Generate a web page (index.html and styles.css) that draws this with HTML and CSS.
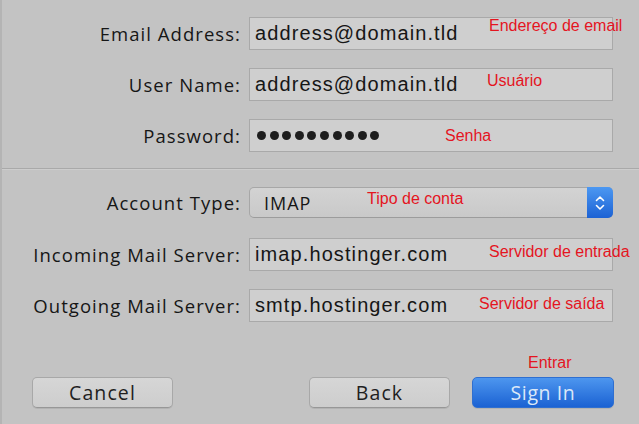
FILE: index.html
```html
<!DOCTYPE html>
<html>
<head>
<meta charset="utf-8">
<link rel="stylesheet" href="styles.css">
</head>
<body>
<div class="window">
  <section class="group group-top">
    <div class="row">
      <label class="label">Email Address:</label>
      <div class="field"><span class="value">address@domain.tld</span><span class="note note-email">Endereço de email</span></div>
    </div>
    <div class="row">
      <label class="label">User Name:</label>
      <div class="field"><span class="value">address@domain.tld</span><span class="note note-user">Usuário</span></div>
    </div>
    <div class="row">
      <label class="label">Password:</label>
      <div class="field"><span class="dots"><i></i><i></i><i></i><i></i><i></i><i></i><i></i><i></i><i></i><i></i></span><span class="note note-pass">Senha</span></div>
    </div>
  </section>
  <div class="separator"></div>
  <section class="group group-bottom">
    <div class="row row-select">
      <label class="label">Account Type:</label>
      <div class="select"><span class="value">IMAP</span><span class="note note-type">Tipo de conta</span>
        <span class="stepper"><svg width="12" height="20" viewBox="0 0 12 20"><path d="M2.5 7.5 L6 4 L9.5 7.5" fill="none" stroke="#fff" stroke-width="1.6" stroke-linecap="round" stroke-linejoin="round"/><path d="M2.5 12.5 L6 16 L9.5 12.5" fill="none" stroke="#fff" stroke-width="1.6" stroke-linecap="round" stroke-linejoin="round"/></svg></span>
      </div>
    </div>
    <div class="row">
      <label class="label">Incoming Mail Server:</label>
      <div class="field"><span class="value">imap.hostinger.com</span><span class="note note-in">Servidor de entrada</span></div>
    </div>
    <div class="row">
      <label class="label">Outgoing Mail Server:</label>
      <div class="field"><span class="value">smtp.hostinger.com</span><span class="note note-out">Servidor de saída</span></div>
    </div>
  </section>
  <div class="buttons">
    <button class="btn btn-cancel">Cancel</button>
    <div class="btn-right">
      <button class="btn btn-back">Back</button>
      <button class="btn btn-primary">Sign In<span class="note note-enter">Entrar</span></button>
    </div>
  </div>
</div>
</body>
</html>
```

FILE: styles.css
```css
html, body {
  margin: 0;
  padding: 0;
  background: #c3c3c3;
}
.window {
  width: 639px;
  height: 424px;
  box-sizing: border-box;
  border-left: 2px solid #b4b4b4;
  background: #c3c3c3;
  font-family: "Liberation Sans", Arial, sans-serif;
  color: #1d1d1d;
  position: relative;
}
.group {
  display: flex;
  flex-direction: column;
}
.group-top {
  padding-top: 17px;
  gap: 18px;
  padding-bottom: 16px;
}
.group-bottom {
  padding-top: 17px;
  gap: 18px;
}
.row {
  display: flex;
  align-items: center;
}
.label {
  width: 247px;
  text-align: right;
  padding-right: 8px;
  box-sizing: border-box;
  font-family: "Open Sans", sans-serif;
  font-size: 18.5px;
  letter-spacing: 1.05px;
  color: #161616;
  flex: none;
}
.field {
  position: relative;
  width: 364px;
  height: 33px;
  box-sizing: border-box;
  background: #cfcfcf;
  border: 1px solid #a9a9a9;
  display: flex;
  align-items: center;
  padding-left: 5px;
}
.value {
  font-size: 20px;
  letter-spacing: 1.1px;
  color: #161616;
}
.dots {
  display: flex;
  gap: 3.6px;
  padding-left: 2px;
}
.dots i {
  display: block;
  width: 9px;
  height: 9px;
  border-radius: 50%;
  background: #1e1e1e;
}
.separator {
  height: 1px;
  background: #a9a9a9;
  border-bottom: 1px solid #cdcdcd;
}
.select {
  position: relative;
  width: 364px;
  height: 31px;
  box-sizing: border-box;
  border-radius: 5px;
  background: linear-gradient(#d3d3d3, #c9c9c9);
  border: 1px solid #a7a7a7;
  border-bottom-color: #9c9c9c;
  display: flex;
  align-items: center;
  padding-left: 14px;
}
.select .value {
  font-family: "Open Sans", sans-serif;
  font-size: 18px;
  letter-spacing: 1px;
}
.stepper {
  position: absolute;
  right: -1px;
  top: -1px;
  bottom: -1px;
  width: 26px;
  border-radius: 0 5px 5px 0;
  background: linear-gradient(#4c98f2, #1c62d4);
  display: flex;
  align-items: center;
  justify-content: center;
}
.row-select {
  margin-bottom: 2px;
}
.note {
  position: absolute;
  color: #e4151f;
  font-family: "Liberation Sans", Arial, sans-serif;
  font-size: 16px;
  letter-spacing: 0;
  white-space: nowrap;
  line-height: 1;
}
.note-email { left: 239px; top: 0px; }
.note-user { left: 237px; top: 4px; }
.note-pass { left: 195px; top: 8px; }
.note-type { left: 117px; top: 3px; }
.note-in { left: 239px; top: 5px; }
.note-out { left: 229px; top: 6px; }
.note-enter { left: 55px; top: -23px; font-size: 16px; }
.buttons {
  position: absolute;
  left: 30px;
  right: 25px;
  top: 377px;
  display: flex;
  justify-content: space-between;
}
.btn-right {
  display: flex;
  gap: 22px;
}
.btn {
  position: relative;
  width: 141px;
  height: 31px;
  border-radius: 5px;
  border: 1px solid #a8a8a8;
  border-bottom-color: #979797;
  background: linear-gradient(#d6d6d6, #cdcdcd);
  font-family: "Open Sans", sans-serif;
  font-size: 19.5px;
  letter-spacing: 1.1px;
  color: #1f1f1f;
  padding: 0;
  box-shadow: 0 1px 0 rgba(0,0,0,0.08);
}
.btn-primary {
  width: 142px;
  border-color: #2f6fd0;
  background: linear-gradient(#4d96ef, #1b62d3);
  color: #dbe8f8;
  letter-spacing: 0.6px;
}
```
